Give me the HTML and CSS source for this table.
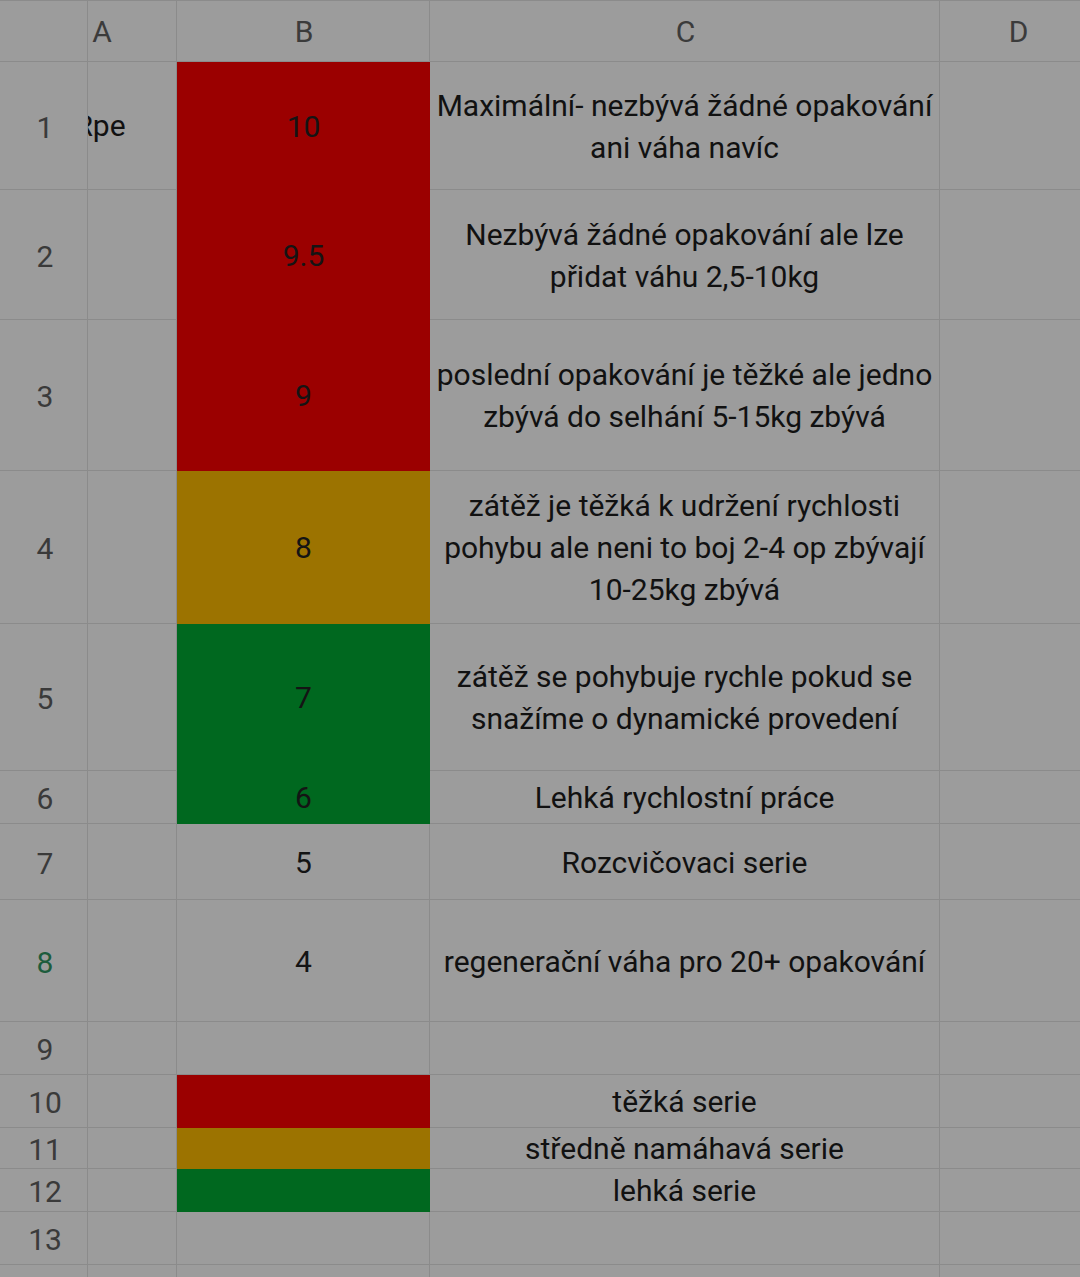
FILE: index.html
```html
<!DOCTYPE html>
<html lang="cs">
<head>
<meta charset="utf-8">
<title>Rpe</title>
<link rel="stylesheet" href="styles.css">
</head>
<body>
<div class="sheet">
  <div class="cell corner"></div>
  <div class="cell colhead a"><div class="shift">A</div></div>
  <div class="cell colhead">B</div>
  <div class="cell colhead">C</div>
  <div class="cell colhead">D</div>

  <div class="cell rn">1</div>
  <div class="cell a"><div class="shift txt">Rpe</div></div>
  <div class="cell b red">10</div>
  <div class="cell c">Maximální- nezbývá žádné opakování<br>ani váha navíc</div>
  <div class="cell d"></div>

  <div class="cell rn">2</div>
  <div class="cell a"></div>
  <div class="cell b red">9.5</div>
  <div class="cell c">Nezbývá žádné opakování ale lze<br>přidat váhu 2,5-10kg</div>
  <div class="cell d"></div>

  <div class="cell rn">3</div>
  <div class="cell a"></div>
  <div class="cell b red">9</div>
  <div class="cell c">poslední opakování je těžké ale jedno<br>zbývá do selhání 5-15kg zbývá</div>
  <div class="cell d"></div>

  <div class="cell rn">4</div>
  <div class="cell a"></div>
  <div class="cell b orange">8</div>
  <div class="cell c">zátěž je těžká k udržení rychlosti<br>pohybu ale neni to boj 2-4 op zbývají<br>10-25kg zbývá</div>
  <div class="cell d"></div>

  <div class="cell rn">5</div>
  <div class="cell a"></div>
  <div class="cell b green">7</div>
  <div class="cell c">zátěž se pohybuje rychle pokud se<br>snažíme o dynamické provedení</div>
  <div class="cell d"></div>

  <div class="cell rn">6</div>
  <div class="cell a"></div>
  <div class="cell b green">6</div>
  <div class="cell c">Lehká rychlostní práce</div>
  <div class="cell d"></div>

  <div class="cell rn">7</div>
  <div class="cell a"></div>
  <div class="cell b">5</div>
  <div class="cell c">Rozcvičovaci serie</div>
  <div class="cell d"></div>

  <div class="cell rn active">8</div>
  <div class="cell a"></div>
  <div class="cell b">4</div>
  <div class="cell c">regenerační váha pro 20+ opakování</div>
  <div class="cell d"></div>

  <div class="cell rn">9</div>
  <div class="cell a"></div>
  <div class="cell b"></div>
  <div class="cell c"></div>
  <div class="cell d"></div>

  <div class="cell rn">10</div>
  <div class="cell a"></div>
  <div class="cell b red"></div>
  <div class="cell c">těžká serie</div>
  <div class="cell d"></div>

  <div class="cell rn">11</div>
  <div class="cell a"></div>
  <div class="cell b orange"></div>
  <div class="cell c">středně namáhavá serie</div>
  <div class="cell d"></div>

  <div class="cell rn">12</div>
  <div class="cell a"></div>
  <div class="cell b green"></div>
  <div class="cell c">lehká serie</div>
  <div class="cell d"></div>

  <div class="cell rn">13</div>
  <div class="cell a"></div>
  <div class="cell b"></div>
  <div class="cell c"></div>
  <div class="cell d"></div>

  <div class="cell rn"></div>
  <div class="cell a"></div>
  <div class="cell b"></div>
  <div class="cell c"></div>
  <div class="cell d"></div>
</div>
</body>
</html>
```

FILE: styles.css
```css
html, body {
  margin: 0;
  padding: 0;
  width: 1080px;
  height: 1277px;
  overflow: hidden;
  background: #9c9c9c;
}

.sheet {
  display: grid;
  grid-template-columns: 88px 89px 253px 510px 156px;
  grid-template-rows: 61px 128px 130px 151px 153px 147px 53px 76px 122px 53px 53px 41px 43px 53px 40px;
  width: 1096px;
  font-family: Roboto, "Noto Sans", sans-serif;
  font-size: 30px;
  line-height: 42px;
  color: #111111;
  border-top: 1px solid #8b8b8b;
  box-sizing: border-box;
}

.cell {
  box-sizing: border-box;
  border-right: 1px solid #8b8b8b;
  border-bottom: 1px solid #8b8b8b;
  display: flex;
  align-items: center;
  justify-content: center;
  text-align: center;
  overflow: hidden;
  background: #9c9c9c;
}

.colhead {
  color: #3b3b3b;
  padding: 2px 0 0 2px;
}

.rn {
  color: #3a3a3a;
  padding: 4px 0 0 3px;
}

.rn.active {
  color: #1d5c3c;
}

.a {
  justify-content: flex-start;
}

.shift {
  flex: none;
  width: 154px;
  margin-left: -65px;
  text-align: center;
}

.shift.txt {
  color: #111111;
}

.b {
  color: #141414;
  padding: 2px 0 0 1px;
}

.c {
  padding: 2px 2px 0;
  white-space: nowrap;
}

.red {
  background: #9b0000;
  border-color: #9b0000;
}

.orange {
  background: #9c7300;
  border-color: #9c7300;
}

.green {
  background: #00681f;
  border-color: #00681f;
}
```
